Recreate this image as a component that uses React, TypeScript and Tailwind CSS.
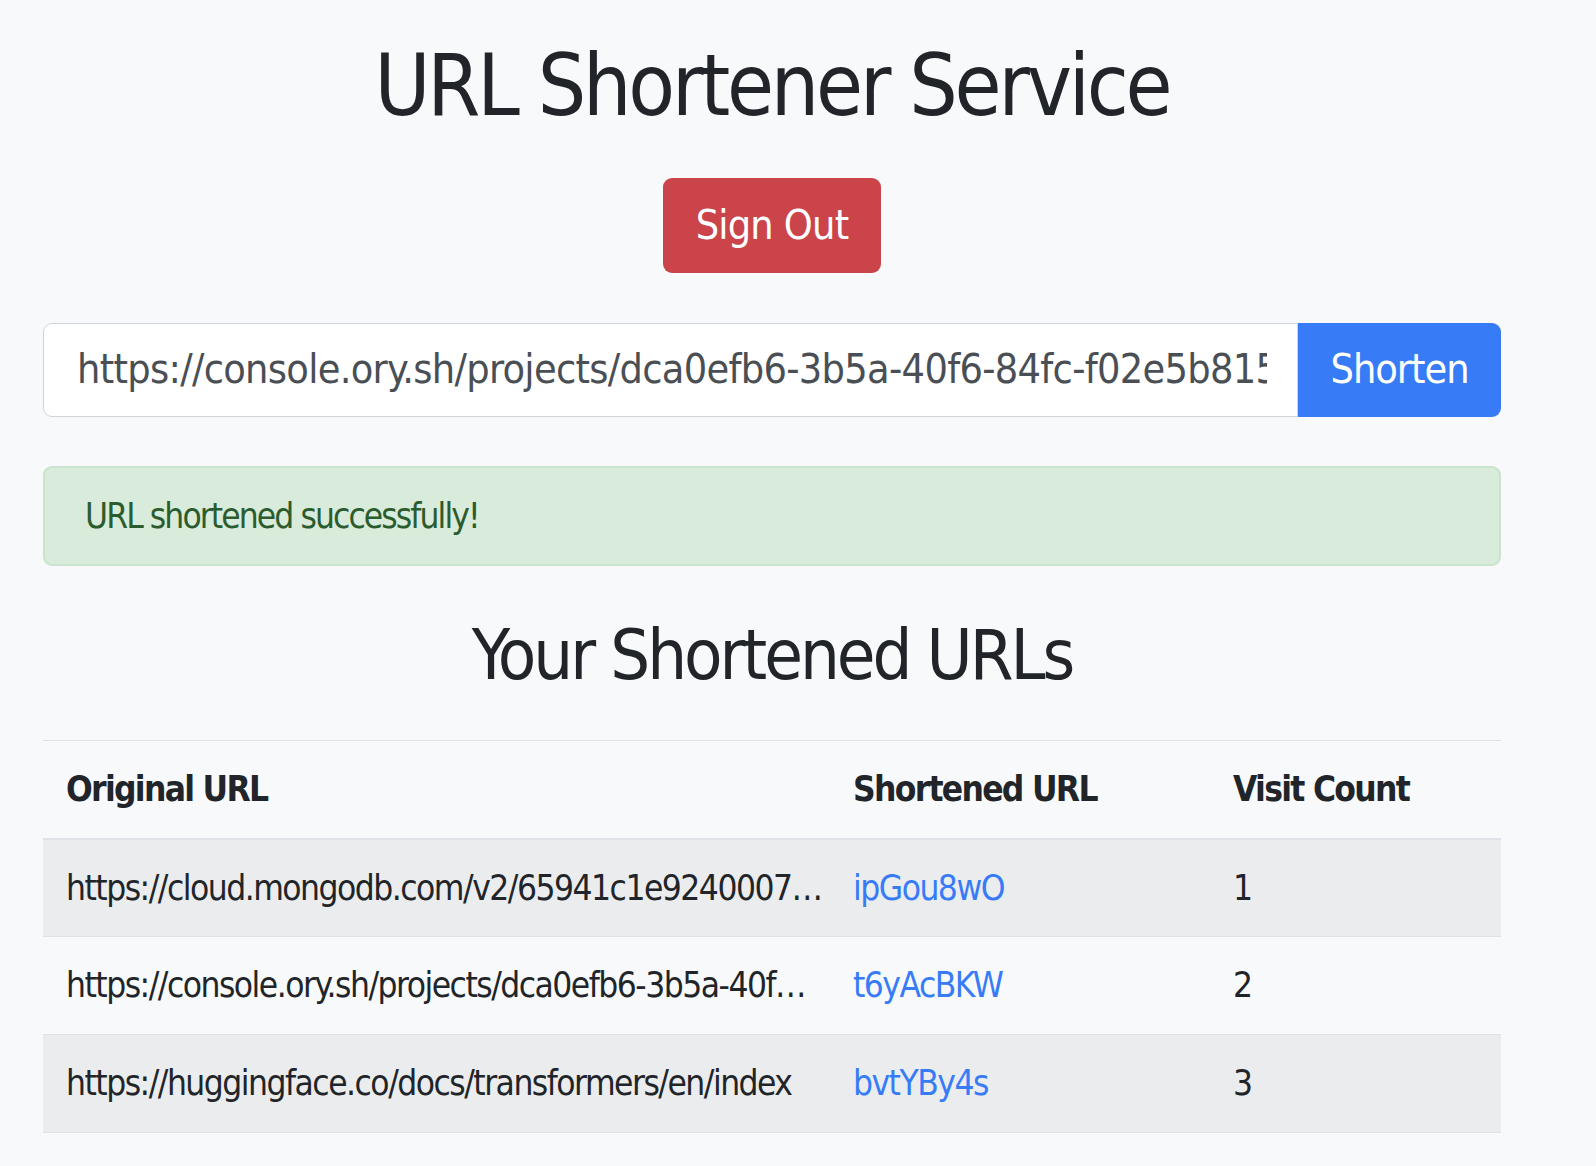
import React from "react";

const rows = [
  {
    original: "https://cloud.mongodb.com/v2/65941c1e9240007…",
    short: "ipGou8wO",
    visits: 1,
  },
  {
    original: "https://console.ory.sh/projects/dca0efb6-3b5a-40f…",
    short: "t6yAcBKW",
    visits: 2,
  },
  {
    original: "https://huggingface.co/docs/transformers/en/index",
    short: "bvtYBy4s",
    visits: 3,
  },
];

export default function App() {
  return (
    <div className="min-h-screen bg-[#f8f9fa] text-[#212529] font-['DejaVu_Sans_Condensed','DejaVu_Sans',sans-serif]">
      <div className="ml-[43px] w-[1458px] pt-[35px]">
        <h1 className="text-center text-[85px] leading-[102px] font-normal tracking-[-3.2px]">
          URL Shortener Service
        </h1>

        <div className="mt-[41px] flex justify-center">
          <button className="h-[95px] w-[218px] rounded-[9px] bg-[#cb444a] text-[41px] tracking-[-0.8px] text-white">
            Sign Out
          </button>
        </div>

        <div className="mt-[50px] flex h-[94px]">
          <input
            readOnly
            value="https://console.ory.sh/projects/dca0efb6-3b5a-40f6-84fc-f02e5b815e3a/settings"
            className="min-w-0 flex-1 rounded-l-[9px] border border-[#ced4da] bg-white pl-[33px] pr-[30px] text-[41px] tracking-[-0.7px] text-[#4a4f55] outline-none"
          />
          <button className="w-[203px] rounded-r-[9px] bg-[#377cf6] text-[41px] tracking-[-1px] text-white">
            Shorten
          </button>
        </div>

        <div className="mt-[49px] flex h-[100px] items-center rounded-[9px] border-2 border-[#c9e3cc] bg-[#d9ebdb] pl-[40px] text-[35px] tracking-[-1.9px] text-[#2b5c2e]">
          URL shortened successfully!
        </div>

        <h2 className="mt-[47px] text-center text-[70px] leading-[84px] font-normal tracking-[-3px]">
          Your Shortened URLs
        </h2>

        <table className="mt-[43px] w-full table-fixed text-left text-[35px] tracking-[-1.5px]">
          <colgroup>
            <col className="w-[786px]" />
            <col className="w-[380px]" />
            <col />
          </colgroup>
          <thead>
            <tr className="h-[98px] border-t border-b-2 border-t-[#dee2e6] border-b-[#dfe2e6]">
              <th className="px-[23px] font-bold tracking-[-1.7px]">Original URL</th>
              <th className="px-[24px] font-bold tracking-[-1.7px]">Shortened URL</th>
              <th className="px-[24px] font-bold tracking-[-1.7px]">Visit Count</th>
            </tr>
          </thead>
          <tbody>
            {rows.map((row, i) => (
              <tr
                key={row.short}
                className={`h-[98px] border-b border-[#dee2e6] ${
                  i % 2 === 0 ? "bg-[#ebecee]" : "bg-[#f8f9fa]"
                }`}
              >
                <td className="overflow-hidden whitespace-nowrap px-[23px]">{row.original}</td>
                <td className="px-[24px]">
                  <a href="#" className="text-[#377cf6]">
                    {row.short}
                  </a>
                </td>
                <td className="px-[24px]">{row.visits}</td>
              </tr>
            ))}
          </tbody>
        </table>
      </div>
    </div>
  );
}
